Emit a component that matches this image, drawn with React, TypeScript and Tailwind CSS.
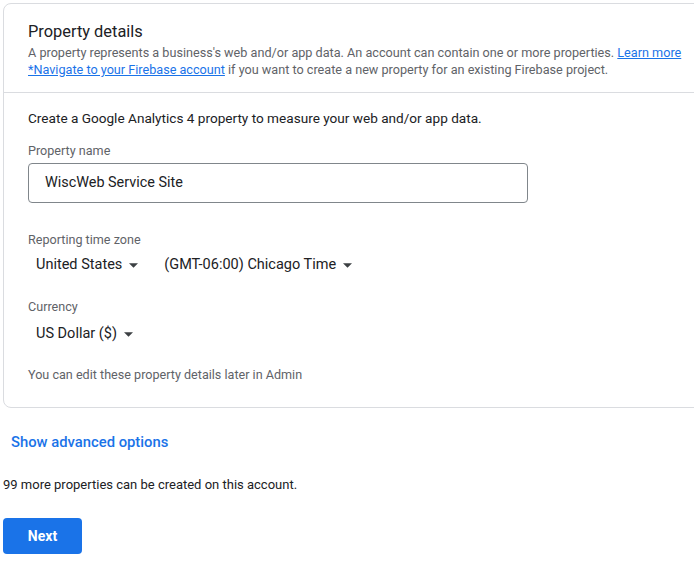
const Caret = () => (
  <svg viewBox="0 0 10 5" className="ml-[7px] h-[5px] w-[9px] fill-[#3c4043]">
    <path d="M0 0 L10 0 L5 5 Z" />
  </svg>
);

const Dropdown = ({ label }: { label: string }) => (
  <button className="flex items-center px-2 text-[14.5px] leading-5 text-[#202124]">
    {label}
    <Caret />
  </button>
);

const App = () => {
  return (
    <div className="min-h-[580px] w-[694px] overflow-hidden bg-white font-['Roboto',sans-serif]">
      <div className="ml-[3px] mt-[3px] w-[740px] rounded-lg border border-[#dadce0]">
        <div className="border-b border-[#dadce0] px-6 pt-4 pb-[14px]">
          <h2 className="text-[16.4px] leading-6 text-[#202124]">Property details</h2>
          <p className="w-[664px] text-[12.65px] leading-[17px] text-[#5f6368]">
            A property represents a business's web and/or app data. An account can contain one or
            more properties.{" "}
            <a href="#" className="text-[#1a73e8] underline">
              Learn more
            </a>{" "}
            <a href="#" className="text-[#1a73e8] underline">
              *Navigate to your Firebase account
            </a>{" "}
            if you want to create a new property for an existing Firebase project.
          </p>
        </div>

        <div className="px-6 pt-[15px] pb-6">
          <p className="text-[13.6px] leading-5 text-[#202124]">
            Create a Google Analytics 4 property to measure your web and/or app data.
          </p>

          <label className="mt-[15px] block text-[12.6px] leading-4 text-[#5f6368]">
            Property name
          </label>
          <div className="mt-[4px] flex h-10 w-[500px] items-center rounded border border-[#80868b] px-4 text-[14.4px] text-[#202124]">
            WiscWeb Service Site
          </div>

          <label className="mt-[29px] block text-[12.6px] leading-4 text-[#5f6368]">
            Reporting time zone
          </label>
          <div className="mt-[7px] flex gap-[10px]">
            <Dropdown label="United States" />
            <Dropdown label="(GMT-06:00) Chicago Time" />
          </div>

          <label className="mt-6 block text-[12.6px] leading-4 text-[#5f6368]">Currency</label>
          <div className="mt-[9px] flex">
            <Dropdown label="US Dollar ($)" />
          </div>

          <p className="mt-[23px] text-[12.6px] leading-4 text-[#5f6368]">
            You can edit these property details later in Admin
          </p>
        </div>
      </div>

      <button className="mt-[24px] ml-[11px] text-[14.8px] leading-5 font-medium text-[#1a73e8]">
        Show advanced options
      </button>

      <p className="mt-[23px] ml-[3px] text-[13px] leading-4 text-[#202124]">
        99 more properties can be created on this account.
      </p>

      <button className="mt-[25px] ml-[3px] h-[36px] w-[79px] rounded bg-[#1a73e8] text-[14px] font-bold text-white">
        Next
      </button>
    </div>
  );
};

export default App;
